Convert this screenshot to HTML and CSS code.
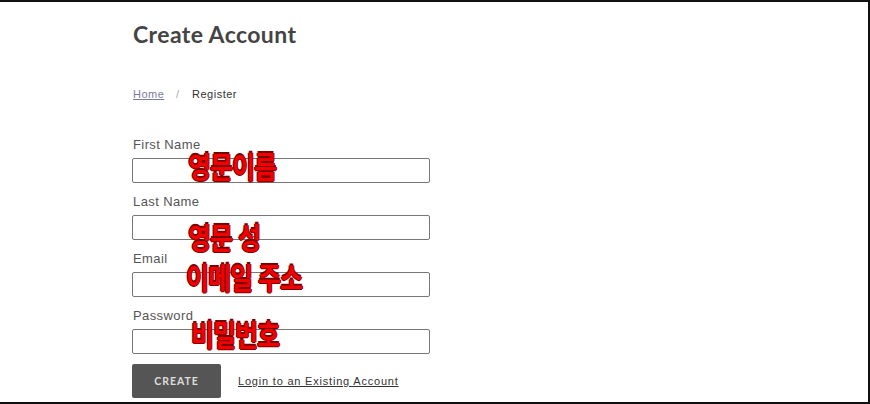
FILE: index.html
```html
<!DOCTYPE html>
<html lang="ko">
<head>
  <meta charset="UTF-8" />
  <meta name="viewport" content="width=device-width, initial-scale=1" />
  <title>Create Account</title>
  <link rel="stylesheet" href="styles.css">
</head>
<body>
  <div class="frame">
    <div class="container">
      <h1>Create Account</h1>
      <nav class="crumbs">
        <a href="#">Home</a>
        <span class="sep">/</span>
        <span>Register</span>
      </nav>
      <form class="register">
        <div class="field">
          <label>First Name</label>
          <input type="text" name="first" />
          <span class="note note-first">영문이름</span>
        </div>
        <div class="field">
          <label>Last Name</label>
          <input type="text" name="last" />
          <span class="note note-last">영문 성</span>
        </div>
        <div class="field">
          <label>Email</label>
          <input type="email" name="email" />
          <span class="note note-email">이메일 주소</span>
        </div>
        <div class="field">
          <label>Password</label>
          <input type="password" name="password" />
          <span class="note note-pass">비밀번호</span>
        </div>
        <div class="actions">
          <button type="submit">Create</button>
          <a href="#" class="login">Login to an Existing Account</a>
        </div>
      </form>
    </div>
  </div>
</body>
</html>
```

FILE: styles.css
```css
html, body {
  margin: 0;
  padding: 0;
  background: #fff;
}
.frame {
  height: 404px;
  box-sizing: border-box;
  border-top: 2px solid #111;
  border-right: 2px solid #111;
  border-bottom: 2px solid #111;
  overflow: hidden;
}
.container {
  padding: 0 0 0 132px;
  font-family: Arial, 'Liberation Sans', sans-serif;
}
h1 {
  font-family: Lato, sans-serif;
  font-weight: 700;
  font-size: 23px;
  letter-spacing: 0.4px;
  color: #444;
  margin: 0;
  padding: 18px 0 0 1px;
  line-height: 28px;
}
.crumbs {
  margin-top: 38px;
  padding-left: 1px;
  font-size: 11px;
  letter-spacing: 0.5px;
  color: #333;
  line-height: 16px;
}
.crumbs a {
  color: #7b7b9c;
}
.crumbs .sep {
  color: #aaa;
  margin: 0 9px 0 8px;
}
.register {
  margin-top: 35px;
  width: 298px;
}
.field {
  position: relative;
  margin-bottom: 11px;
}
label {
  display: block;
  padding-left: 1px;
  font-size: 13px;
  letter-spacing: 0.4px;
  color: #555;
  line-height: 16px;
  margin-bottom: 5px;
}
input {
  display: block;
  width: 100%;
  box-sizing: border-box;
  height: 25px;
  border: 1px solid #777;
  border-radius: 2px;
  background: #fff;
  margin: 0;
}
.note {
  position: absolute;
  font-family: 'Noto Sans CJK KR', sans-serif;
  font-weight: 700;
  font-size: 25px;
  line-height: 1;
  color: #f20000;
  letter-spacing: -1px;
  white-space: nowrap;
  transform: scaleY(1.2);
  transform-origin: left top;
  text-shadow: 1px 0 0 #700, -1px 0 0 #700, 0 1px 0 #700, 0 -1px 0 #700;
}
.note-first { left: 56px; top: 13px; }
.note-last { left: 56px; top: 27px; }
.note-email { left: 54px; top: 10px; }
.note-pass { left: 59px; top: 10px; }
.actions {
  display: flex;
  align-items: center;
  gap: 17px;
  margin-top: -1px;
}
button {
  width: 89px;
  height: 34px;
  background: #555;
  color: #ddd;
  border: none;
  border-radius: 2px;
  font-family: Lato, sans-serif;
  font-weight: 700;
  font-size: 10.5px;
  letter-spacing: 1px;
  text-transform: uppercase;
}
.login {
  font-size: 11px;
  letter-spacing: 0.8px;
  color: #333;
}
```
